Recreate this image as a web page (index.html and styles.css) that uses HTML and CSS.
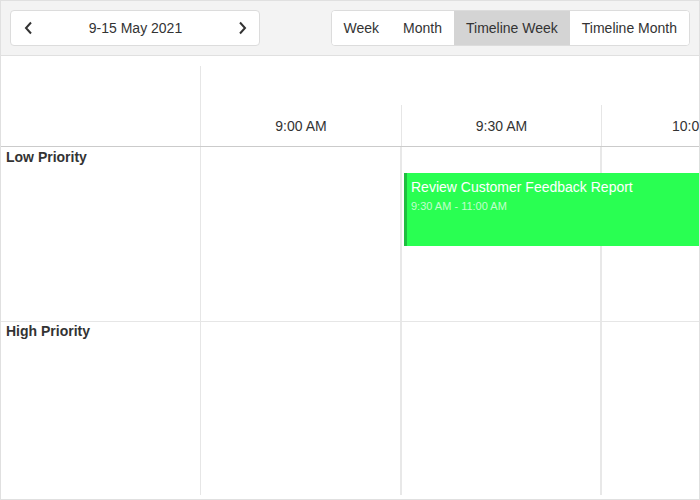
FILE: index.html
```html
<!DOCTYPE html>
<html>
<head>
<meta charset="utf-8">
<link rel="stylesheet" href="styles.css">
</head>
<body>
<div class="app">
  <div class="toolbar">
    <div class="nav">
      <button class="arrow" aria-label="Previous">
        <svg width="12" height="14" viewBox="0 0 12 14"><path d="M8 1.5 L3 7 L8 12.5" fill="none" stroke="#333" stroke-width="2"/></svg>
      </button>
      <span class="range">9-15 May 2021</span>
      <button class="arrow" aria-label="Next">
        <svg width="12" height="14" viewBox="0 0 12 14"><path d="M4 1.5 L9 7 L4 12.5" fill="none" stroke="#333" stroke-width="2"/></svg>
      </button>
    </div>
    <div class="views">
      <button class="view">Week</button>
      <button class="view">Month</button>
      <button class="view active">Timeline Week</button>
      <button class="view">Timeline Month</button>
    </div>
  </div>
  <div class="header">
    <div class="corner"></div>
    <div class="timehead">
      <div class="daterow"></div>
      <div class="timerow">
        <div class="tcell first">9:00 AM</div>
        <div class="tcell">9:30 AM</div>
        <div class="tcell">10:00 AM</div>
      </div>
    </div>
  </div>
  <div class="rows">
    <div class="row first-row">
      <div class="resource">Low Priority</div>
      <div class="cells">
        <div class="cell first"></div>
        <div class="cell"></div>
        <div class="cell"></div>
        <div class="event">
          <div class="ev-title">Review Customer Feedback Report</div>
          <div class="ev-time">9:30 AM - 11:00 AM</div>
        </div>
      </div>
    </div>
    <div class="row last-row">
      <div class="resource second">High Priority</div>
      <div class="cells">
        <div class="cell first"></div>
        <div class="cell"></div>
        <div class="cell"></div>
      </div>
    </div>
  </div>
</div>
</body>
</html>
```

FILE: styles.css
```css
* { box-sizing: border-box; }
html, body { margin: 0; padding: 0; background: #fff; }
body { font-family: "Liberation Sans", Arial, sans-serif; color: #333; font-size: 14px; }

.app {
  width: 700px;
  height: 500px;
  border: 1px solid #e0e0e0;
  display: flex;
  flex-direction: column;
  overflow: hidden;
  background: #fff;
}

.toolbar {
  height: 55px;
  flex: none;
  background: #f3f3f3;
  border-bottom: 1px solid #e0e0e0;
  padding: 9px;
  display: flex;
  justify-content: space-between;
  align-items: flex-start;
}

.nav {
  width: 250px;
  height: 36px;
  background: #fff;
  border: 1px solid #dcdcdc;
  border-radius: 4px;
  display: flex;
  align-items: center;
  justify-content: space-between;
  padding: 0 10px 0 11px;
}
.arrow {
  border: 0;
  background: transparent;
  padding: 0;
  width: 14px;
  height: 16px;
  display: flex;
  align-items: center;
  justify-content: center;
}
.range { font-size: 14px; color: #333; }

.views {
  display: flex;
  height: 36px;
  border: 1px solid #dcdcdc;
  border-radius: 4px;
  background: #fff;
  overflow: hidden;
}
.view {
  border: 0;
  background: #fff;
  font-family: inherit;
  font-size: 14px;
  color: #333;
  padding: 0 12px;
  height: 34px;
}
.view.active { background: #d4d4d4; }

.header {
  height: 91px;
  flex: none;
  display: flex;
  border-bottom: 1px solid #cbcbcb;
}
.corner {
  width: 200px;
  flex: none;
  margin-top: 10px;
  border-right: 1px solid #e6e6e6;
}
.timehead {
  flex: 1;
  display: flex;
  flex-direction: column;
  padding-top: 10px;
  overflow: hidden;
}
.daterow { height: 39px; flex: none; }
.timerow { flex: 1; display: flex; }
.tcell {
  width: 200px;
  flex: none;
  border-left: 1px solid #e6e6e6;
  display: flex;
  align-items: center;
  justify-content: center;
  font-size: 14px;
  color: #333;
}
.tcell.first { border-left: 0; }

.rows {
  flex: 1;
  display: flex;
  flex-direction: column;
  padding-bottom: 4px;
}
.row { display: flex; }
.first-row { height: 175px; border-bottom: 1px solid #e6e6e6; flex: none; }
.last-row { flex: 1; }
.resource {
  width: 200px;
  flex: none;
  border-right: 1px solid #e6e6e6;
  font-weight: bold;
  font-size: 14px;
  line-height: 16px;
  padding: 2px 5px;
  color: #333;
}
.resource.second { padding-top: 1px; }
.cells {
  flex: 1;
  display: flex;
  position: relative;
  overflow: hidden;
}
.cell {
  width: 200px;
  flex: none;
  border-left: 2px solid #e8e8e8;
}
.cell.first { width: 199px; border-left: 0; }

.event {
  position: absolute;
  left: 203px;
  top: 26px;
  width: 600px;
  height: 73px;
  background: #29ff52;
  border-left: 3px solid #1fbf40;
  padding: 6px 4px 5px;
  color: #fff;
}
.ev-title { font-size: 14px; line-height: 17px; }
.ev-time { font-size: 11px; line-height: 14px; margin-top: 3px; color: rgba(255,255,255,0.72); }
```
